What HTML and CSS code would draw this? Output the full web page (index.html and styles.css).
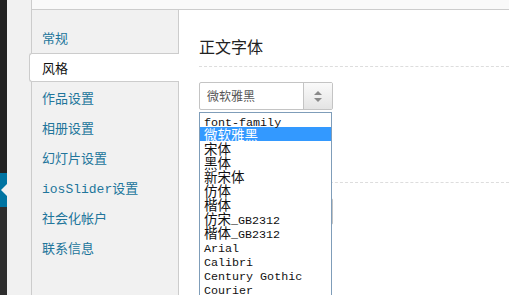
FILE: index.html
```html
<!DOCTYPE html>
<html lang="zh-CN">
<head>
    <meta charset="UTF-8">
    <meta name="viewport" content="width=device-width, initial-scale=1.0">
    <title>主题设置</title>
    <link rel="stylesheet" href="styles.css">
</head>
<body>

    <div class="adminmenu">
        <div class="menu-top"></div>
        <div class="menu-current"></div>
        <div class="menu-rest"></div>
    </div>

    <div class="wrap">
        <div class="panel">
            <div class="topbar"></div>
            <div class="panel-body">
                <ul class="tabs">
                    <li><a href="#">常规</a></li>
                    <li class="active"><a href="#">风格</a></li>
                    <li><a href="#">作品设置</a></li>
                    <li><a href="#">相册设置</a></li>
                    <li><a href="#">幻灯片设置</a></li>
                    <li><a href="#"><span class="latin">iosSlider</span>设置</a></li>
                    <li><a href="#">社会化帐户</a></li>
                    <li><a href="#">联系信息</a></li>
                </ul>

                <div class="content">
                    <div class="section">
                        <h3>正文字体</h3>
                    </div>
                    <div class="field">
                        <div class="select">
                            <span class="select-value">微软雅黑</span>
                            <span class="select-arrow">
                                <svg width="8" height="11" viewBox="0 0 8 11">
                                    <path d="M4 0 L8 4 L0 4 Z" fill="#8a8a8a"/>
                                    <path d="M4 11 L8 7 L0 7 Z" fill="#8a8a8a"/>
                                </svg>
                            </span>
                        </div>

                        <ul class="listbox">
                            <li><span class="latin">font-family</span></li>
                            <li class="selected">微软雅黑</li>
                            <li>宋体</li>
                            <li>黑体</li>
                            <li>新宋体</li>
                            <li>仿体</li>
                            <li>楷体</li>
                            <li>仿宋<span class="latin">_GB2312</span></li>
                            <li>楷体<span class="latin">_GB2312</span></li>
                            <li><span class="latin">Arial</span></li>
                            <li><span class="latin">Calibri</span></li>
                            <li><span class="latin">Century Gothic</span></li>
                            <li><span class="latin">Courier</span></li>
                        </ul>
                    </div>

                    <div class="section">
                        <h3>标题字体</h3>
                    </div>
                    <div class="field">
                        <div class="select select-small"></div>
                    </div>
                </div>
            </div>
        </div>
    </div>

</body>
</html>
```

FILE: styles.css
```css
body {
    margin: 0;
    height: 295px;
    overflow: hidden;
    display: flex;
    font-family: "Noto Sans CJK SC", "Liberation Sans", sans-serif;
    background-color: #f1f1f1;
}
ul {
    list-style: none;
    margin: 0;
    padding: 0;
}
.latin {
    font-family: "Liberation Mono", monospace;
}

/* dark admin column on the far left */
.adminmenu {
    width: 7px;
    display: flex;
    flex-direction: column;
}
.menu-top {
    height: 173px;
    background-color: #222;
}
.menu-current {
    height: 34px;
    background-color: #0074a2;
    position: relative;
}
.menu-current::after {
    content: "";
    position: absolute;
    right: 0;
    top: 11px;
    border-top: 6px solid transparent;
    border-bottom: 6px solid transparent;
    border-right: 6px solid #f1f1f1;
}
.menu-rest {
    flex: 1;
    background-color: #2e2e2e;
}

.wrap {
    flex: 1;
    padding-left: 24px;
    background-color: #f1f1f1;
}
.panel {
    height: 100%;
    border-left: 1px solid #ccc;
    display: flex;
    flex-direction: column;
}
.topbar {
    height: 9px;
    background-color: #f9f9f9;
    border-bottom: 1px solid #ccc;
}
.panel-body {
    flex: 1;
    display: flex;
}

/* vertical tabs */
.tabs {
    width: 146px;
    padding-top: 13px;
    background-color: #f1f1f1;
    border-right: 1px solid #ccc;
}
.tabs li {
    height: 30px;
}
.tabs a {
    display: block;
    height: 30px;
    line-height: 30px;
    padding-left: 10px;
    font-size: 13px;
    color: #21759b;
    text-decoration: none;
}
.tabs li.active a {
    box-sizing: border-box;
    height: 29px;
    line-height: 27px;
    margin-left: -3px;
    margin-right: -1px;
    padding-left: 12px;
    color: #111;
    background-color: #fff;
    border: 1px solid #ccc;
    border-right: none;
    border-radius: 3px 0 0 3px;
}

/* settings */
.content {
    flex: 1;
    background-color: #fff;
    padding-left: 20px;
}
.section {
    padding-top: 26px;
    padding-bottom: 10px;
    border-bottom: 1px dashed #ddd;
}
.section h3 {
    margin: 0;
    font-size: 16px;
    line-height: 20px;
    font-weight: normal;
    color: #222;
}
.field {
    position: relative;
    margin-top: 15px;
    margin-bottom: 16px;
}
.select {
    box-sizing: border-box;
    width: 134px;
    height: 28px;
    display: flex;
    border: 1px solid #c4c4c4;
    border-radius: 2px;
    background-color: #fff;
}
.select-small {
    height: 27px;
}
.select-value {
    flex: 1;
    padding-left: 7px;
    line-height: 26px;
    font-size: 12px;
    color: #555;
}
.select-arrow {
    width: 28px;
    display: flex;
    align-items: center;
    justify-content: center;
    border-left: 1px solid #c4c4c4;
    background: linear-gradient(#fafafa, #e4e4e4);
}

/* open dropdown list */
.listbox {
    position: absolute;
    left: 0;
    top: 30px;
    width: 131px;
    height: 183px;
    overflow: hidden;
    border: 1px solid #7f9db9;
    border-bottom: none;
    background-color: #fff;
    z-index: 2;
}
.listbox li {
    height: 14px;
    line-height: 14px;
    padding-left: 4px;
    font-size: 13.5px;
    color: #111;
    white-space: nowrap;
}
.listbox li .latin {
    font-size: 11.7px;
}
.listbox li.selected {
    background-color: #3399ff;
    color: #fff;
}
```
